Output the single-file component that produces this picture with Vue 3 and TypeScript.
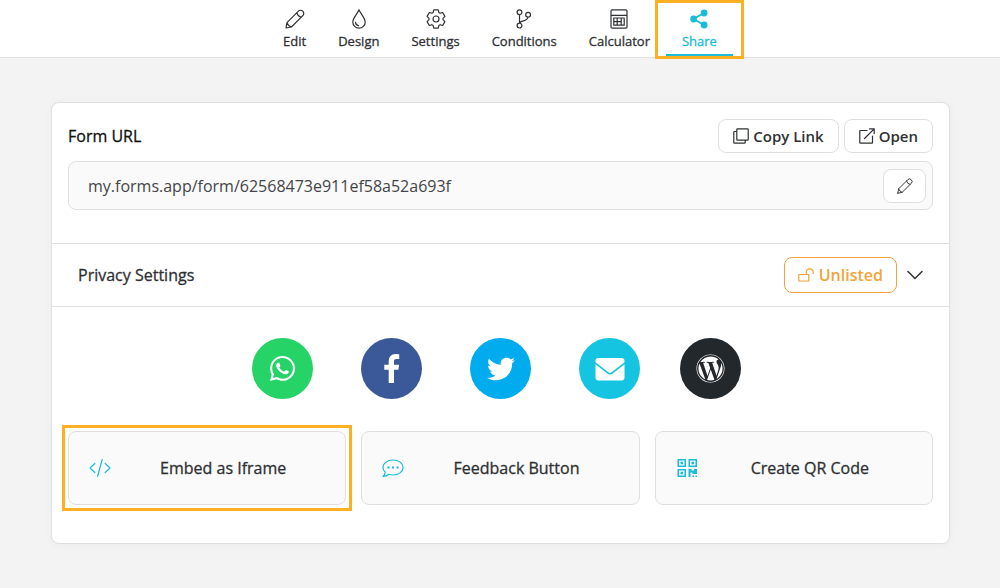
<script setup lang="ts">
import { ref } from 'vue'

interface Tab {
  label: string
  stroke?: string
  fill?: string
}

interface SocialLink {
  name: string
  color: string
  viewBox: string
  size: number
  path: string
}

const tabs: Tab[] = [
  {
    label: 'Edit',
    stroke:
      'M1 19l1-5.4L13.4 2.200a3 3 0 0 1 4.400 0a3 3 0 0 1 0 4.400L6.400 18L1 19zM11.900 3.700q.6 3.600 4.400 4.400M2 13.600q.8 3.200 4.400 4.400',
  },
  {
    label: 'Design',
    stroke: 'M10 .8C8.300 5 3.800 9 3.800 13.200a6.200 6 0 0 0 12.400 0C16.200 9 11.700 5 10 .8zM6.500 13.400a3.500 3.400 0 0 0 3 3.200',
  },
  {
    label: 'Settings',
    stroke:
      'M7.800 .9H12.200L12.900 3.600L14.100 4.300L16.700 3.500L18.900 7.400L17 9.300V10.700L18.900 12.600L16.700 16.500L14.100 15.700L12.900 16.400L12.200 19.100H7.800L7.100 16.400L5.900 15.700L3.300 16.500L1.100 12.600L3 10.700V9.300L1.100 7.400L3.300 3.500L5.900 4.300L7.100 3.600ZM13 10a3 3 0 1 1-6 0a3 3 0 0 1 6 0z',
  },
  {
    label: 'Conditions',
    stroke:
      'M7.900 3.200a2.400 2.400 0 1 1-4.800 0a2.400 2.400 0 0 1 4.800 0zM7.900 16.600a2.400 2.400 0 1 1-4.800 0a2.400 2.400 0 0 1 4.800 0zM16.500 5.700a2.400 2.400 0 1 1-4.800 0a2.400 2.400 0 0 1 4.800 0zM5.500 5.600V14.200M13.800 8.100C13.600 13.500 6.500 10.500 5.800 14.200',
  },
  {
    label: 'Calculator',
    stroke:
      'M3.200 .8H16.800Q18 .8 18 2V18Q18 19.200 16.800 19.200H3.200Q2 19.200 2 18V2Q2 .8 3.200 .8zM2 6.300H18M4.800 9H15.200V16.200H4.800zM4.800 12.600H12.200M8.200 9V16.200M12.200 9V16.200',
  },
  {
    label: 'Share',
    stroke: 'M15 4L4.500 10L15 16',
    fill: 'M18.500 4a3.400 3.400 0 1 1-6.800 0a3.400 3.400 0 0 1 6.800 0zM8 10a3.400 3.400 0 1 1-6.800 0a3.400 3.400 0 0 1 6.800 0zM18.500 16a3.400 3.400 0 1 1-6.800 0a3.400 3.400 0 0 1 6.800 0z',
  },
]

const socials: SocialLink[] = [
  {
    name: 'WhatsApp',
    color: '#25d366',
    viewBox: '0 32 448 448',
    size: 25,
    path: 'M380.9 97.1C339 55.1 283.2 32 223.9 32c-122.4 0-222 99.6-222 222 0 39.1 10.2 77.3 29.6 111L0 480l117.7-30.9c32.4 17.7 68.9 27 106.1 27h.1c122.3 0 224.1-99.6 224.1-222 0-59.3-25.2-115-67.1-157zm-157 341.6c-33.2 0-65.7-8.9-94-25.7l-6.7-4-69.8 18.3L72 359.2l-4.4-7c-18.500-29.400-28.200-63.300-28.200-98.200 0-101.700 82.800-184.500 184.600-184.500 49.300 0 95.600 19.200 130.400 54.100 34.800 34.900 56.200 81.200 56.100 130.500 0 101.800-84.900 184.600-186.600 184.600zm101.200-138.200c-5.500-2.800-32.800-16.200-37.900-18-5.100-1.900-8.800-2.800-12.500 2.800-3.700 5.600-14.300 18-17.600 21.800-3.200 3.700-6.500 4.200-12 1.400-32.600-16.300-54-29.100-75.500-66-5.700-9.800 5.700-9.100 16.300-30.300 1.800-3.700.9-6.900-.5-9.700-1.400-2.800-12.500-30.100-17.100-41.200-4.500-10.800-9.100-9.300-12.500-9.500-3.200-.2-6.900-.2-10.600-.2-3.700 0-9.700 1.400-14.800 6.900-5.100 5.600-19.400 19-19.400 46.300 0 27.300 19.900 53.700 22.600 57.400 2.800 3.700 39.100 59.700 94.800 83.800 35.200 15.200 49 16.500 66.600 13.900 10.700-1.600 32.800-13.400 37.400-26.400 4.600-13 4.600-24.100 3.200-26.400-1.300-2.500-5-3.900-10.500-6.600z',
  },
  {
    name: 'Facebook',
    color: '#3b5998',
    viewBox: '0 0 1792 1664',
    size: 31,
    path: 'M1343 12v264h-157q-86 0-116 36t-30 108v189h293l-39 296h-254v759h-306v-759h-255v-296h255v-218q0-186 104-288.500t277-102.500q147 0 228 12z',
  },
  {
    name: 'Twitter',
    color: '#00acee',
    viewBox: '0 0 512 512',
    size: 28,
    path: 'M459.370 151.716c.325 4.548.325 9.097.325 13.645 0 138.720-105.583 298.558-298.558 298.558-59.452 0-114.680-17.219-161.137-47.106 8.447.974 16.568 1.299 25.340 1.299 49.055 0 94.213-16.568 130.274-44.832-46.132-.975-84.792-31.188-98.112-72.772 6.498.974 12.995 1.624 19.818 1.624 9.421 0 18.843-1.300 27.614-3.573-48.081-9.747-84.143-51.980-84.143-102.985v-1.299c13.969 7.797 30.214 12.670 47.431 13.319-28.264-18.843-46.781-51.005-46.781-87.391 0-19.492 5.197-37.360 14.294-52.954 51.655 63.675 129.300 105.258 216.365 109.807-1.624-7.797-2.599-15.918-2.599-24.040 0-57.828 46.782-104.934 104.934-104.934 30.213 0 57.502 12.670 76.670 33.137 23.715-4.548 46.456-13.320 66.599-25.340-7.798 24.366-24.366 44.833-46.132 57.827 21.117-2.273 41.584-8.122 60.426-16.243-14.292 20.791-32.161 39.308-52.628 54.253z',
  },
  {
    name: 'Email',
    color: '#14c4e0',
    viewBox: '0 0 30 30',
    size: 30,
    path: 'M3.500 4H26.500Q29.500 4 29.500 7V8.200L16.600 18.300Q15 19.500 13.400 18.300L.5 8.200V7Q.5 4 3.500 4zM.5 10.300L12.600 19.700Q15 21.300 17.400 19.700L29.500 10.300V23.500Q29.500 26.500 26.500 26.500H3.500Q.5 26.500 .5 23.500z',
  },
  {
    name: 'WordPress',
    color: '#23282d',
    viewBox: '0 0 512 512',
    size: 29,
    path: 'M61.700 169.400l101.500 278C92.200 413 43.300 340.200 43.300 256c0-30.900 6.600-60.100 18.400-86.600zm337.900 75.900c0-26.300-9.400-44.500-17.500-58.700-10.800-17.500-20.900-32.400-20.900-49.900 0-19.600 14.800-37.800 35.700-37.800.9 0 1.800.1 2.800.2-37.900-34.700-88.300-55.900-143.700-55.900-74.300 0-139.700 38.100-177.800 95.900 5 .2 9.700.3 13.700.3 22.200 0 56.700-2.700 56.700-2.700 11.500-.7 12.800 16.200 1.400 17.500 0 0-11.500 1.300-24.300 2l77.500 230.400L249.800 247l-33.100-90.800c-11.500-.7-22.300-2-22.300-2-11.500-.7-10.100-18.200 1.300-17.500 0 0 35.100 2.700 56 2.700 22.200 0 56.700-2.700 56.700-2.700 11.500-.7 12.800 16.200 1.400 17.500 0 0-11.500 1.300-24.300 2l76.900 228.700 21.200-70.900c9-29.400 16-50.500 16-68.700zm-139.900 29.300l-63.800 185.500c19.100 5.600 39.200 8.700 60.100 8.700 24.800 0 48.500-4.300 70.600-12.100-.6-.9-1.100-1.900-1.500-2.900l-65.400-179.200zm183-120.700c.9 6.800 1.400 14 1.400 21.900 0 21.600-4 45.800-16.200 76.200l-65 187.900C426.200 403 468.700 334.500 468.700 256c0-37-9.400-71.800-26-102.100zM504 256c0 136.800-111.300 248-248 248C119.200 504 8 392.700 8 256 8 119.200 119.200 8 256 8c136.700 0 248 111.200 248 248zm-11.400 0c0-130.500-106.200-236.600-236.600-236.600C125.500 19.400 19.400 125.500 19.400 256S125.600 492.600 256 492.600c130.500 0 236.600-106.100 236.600-236.600z',
  },
]

const activeTab = ref('Share')
const formUrl = ref('my.forms.app/form/62568473e911ef58a52a693f')
</script>

<template>
  <div class="page">
    <header class="topbar">
      <nav class="tabs" aria-label="Form builder">
        <button
          v-for="tab in tabs"
          :key="tab.label"
          type="button"
          class="tab medium"
          :class="{ active: tab.label === activeTab }"
          @click="activeTab = tab.label"
        >
          <svg class="tab-icon" viewBox="0 0 20 20" aria-hidden="true">
            <path v-if="tab.stroke" class="line" :class="{ heavy: tab.fill }" :d="tab.stroke" />
            <path v-if="tab.fill" class="solid" :d="tab.fill" />
          </svg>
          <span>{{ tab.label }}</span>
          <span v-if="tab.label === 'Share'" class="highlight tab-highlight"></span>
        </button>
      </nav>
    </header>

    <main class="content">
      <section class="card">
        <div class="url-section">
          <div class="url-head">
            <label class="title medium" for="form-url">Form URL</label>
            <div class="actions">
              <button type="button" class="btn">
                <svg class="btn-icon" viewBox="0 0 16 16" aria-hidden="true">
                  <path class="line" d="M4.500 .8H14.500Q15.200 .8 15.200 1.500V11.500Q15.200 12.200 14.500 12.200H4.500Q3.800 12.200 3.800 11.500V1.500Q3.800 .8 4.500 .8zM3.800 3.500H1.500Q.8 3.500 .8 4.200V14.500Q.8 15.200 1.500 15.200H11.500Q12.200 15.200 12.200 14.500V12.200" />
                </svg>
                Copy Link
              </button>
              <button type="button" class="btn">
                <svg class="btn-icon" viewBox="0 0 16 16" aria-hidden="true">
                  <path class="line" d="M8 2.500H1.500Q.8 2.500 .8 3.200V14.500Q.8 15.200 1.500 15.200H12.800Q13.500 15.200 13.500 14.500V8M10.500 .8H15.200V5.500M15.200 .8L5.500 10.500" />
                </svg>
                Open
              </button>
            </div>
          </div>
          <div class="url-box">
            <input id="form-url" v-model="formUrl" class="url-input" type="text" readonly />
            <button type="button" class="edit-btn" aria-label="Edit URL">
              <svg class="btn-icon" viewBox="0 0 20 20" aria-hidden="true">
                <path class="line" :d="tabs[0].stroke" />
              </svg>
            </button>
          </div>
        </div>

        <div class="privacy">
          <h2 class="privacy-title medium">Privacy Settings</h2>
          <div class="privacy-controls">
            <button type="button" class="badge">
              <svg class="btn-icon" viewBox="0 0 16 16" aria-hidden="true">
                <path class="line" d="M.8 7.500H10.800V14H.8zM8.300 7.500V5Q8.300 1.800 11.700 1.800Q15.200 1.800 15.200 5V6.500" />
              </svg>
              Unlisted
            </button>
            <button type="button" class="chevron" aria-label="Expand privacy settings">
              <svg class="btn-icon" viewBox="0 0 16 16" aria-hidden="true">
                <path class="line chevron-line" d="M1 4.500L8 11.500L15 4.500" />
              </svg>
            </button>
          </div>
        </div>

        <div class="share">
          <div class="socials">
            <a
              v-for="item in socials"
              :key="item.name"
              href="#"
              class="social"
              :aria-label="item.name"
              :style="{ background: item.color }"
            >
              <svg :width="item.size" :height="item.size" :viewBox="item.viewBox" aria-hidden="true">
                <path class="solid" :d="item.path" />
              </svg>
            </a>
          </div>

          <div class="tiles">
            <button type="button" class="tile medium">
              <svg class="tile-icon" viewBox="0 0 32 24" aria-hidden="true">
                <path class="line" d="M10.800 7.500L6 12L10.800 16.500M21.200 7.500L26 12L21.200 16.500M18.200 3.500L13.500 20.500" />
              </svg>
              <span class="tile-label">Embed as Iframe</span>
              <span class="highlight tile-highlight"></span>
            </button>
            <button type="button" class="tile medium">
              <svg class="tile-icon" viewBox="0 0 32 24" aria-hidden="true">
                <path class="line" d="M16 4C21.500 4 26 7.200 26 11.500S21.500 19 16 19Q13.800 19 12 18.300Q9.500 20.500 6 20.400Q8 18.500 8.200 16.200Q6 14.200 6 11.500C6 7.200 10.500 4 16 4z" />
                <path class="solid" d="M10.500 10.500h2v2h-2zM15 10.500h2v2h-2zM19.500 10.500h2v2h-2z" />
              </svg>
              <span class="tile-label">Feedback Button</span>
            </button>
            <button type="button" class="tile medium">
              <svg class="tile-icon" viewBox="0 0 32 24" aria-hidden="true">
                <path class="solid" fill-rule="evenodd" d="M6.500 3h8.500v8H6.500zM8 4.500v5h5.500v-5zM17.500 3H26v8h-8.500zM19 4.500v5h5.500v-5zM6.500 13h8.500v8H6.500zM8 14.500v5h5.500v-5zM9.500 5.800h2.500v2.400H9.500zM20.500 5.800H23v2.400h-2.500zM9.500 15.800h2.500v2.400H9.500zM17.500 13h3v1.500h2.500V13h3v5h-4.500v-1.500H19.500V21h-2zM21.500 19.500H23V21h-1.500zM24.500 19.500H26V21h-1.500z" />
              </svg>
              <span class="tile-label">Create QR Code</span>
            </button>
          </div>
        </div>
      </section>
    </main>
  </div>
</template>

<style>
body {
  margin: 0;
  background: #f3f3f4;
}
</style>

<style scoped>
.page {
  min-height: 100vh;
  background: #f3f3f4;
  color: #2f3033;
  font-family: 'Open Sans', 'Noto Sans', sans-serif;
  font-size: 16px;
  line-height: 24px;
}

* {
  box-sizing: border-box;
}

button {
  font: inherit;
  color: inherit;
  cursor: pointer;
}

svg {
  display: block;
  flex: none;
}

/* Open Sans has no 500 face here, so a hairline outline thickens the regular one */
.medium {
  -webkit-text-stroke: 0.3px currentColor;
}

.line {
  fill: none;
  stroke: currentColor;
  stroke-width: 1.2;
  stroke-linecap: round;
  stroke-linejoin: round;
}

.heavy {
  stroke-width: 2;
}

.solid {
  fill: currentColor;
}

.topbar {
  display: flex;
  justify-content: center;
  background: #fff;
  border-bottom: 1px solid #e2e2e3;
}

.tabs {
  display: flex;
}

.tab {
  position: relative;
  display: flex;
  flex-direction: column;
  align-items: center;
  gap: 4px;
  padding: 9px 16px 4px;
  border: 0;
  border-bottom: 3px solid transparent;
  background: none;
  font-size: 13px;
  line-height: 17px;
}

.tab-icon {
  width: 20px;
  height: 20px;
}

.tab.active {
  color: #19bcd9;
  border-bottom-color: #19bcd9;
}

.highlight {
  position: absolute;
  border: 3px solid #fdb022;
  pointer-events: none;
}

.tab-highlight {
  inset: 0 -11px -5px;
}

.content {
  padding: 44px 50px 44px 51px;
}

.card {
  background: #fff;
  border: 1px solid #dfdfe0;
  border-radius: 8px;
  box-shadow: 0 1px 8px rgba(0, 0, 0, 0.04);
}

.url-section {
  padding: 16px 16px 33px;
}

.url-head {
  display: flex;
  align-items: center;
  justify-content: space-between;
  margin-bottom: 8px;
}

.title {
  color: #111;
}

.actions {
  display: flex;
  gap: 5px;
}

.btn {
  display: flex;
  align-items: center;
  gap: 4px;
  height: 34px;
  padding: 0 14px;
  border: 1px solid #dfdfe0;
  border-radius: 8px;
  background: #fff;
  font-size: 15px;
  font-weight: 600;
}

.btn-icon {
  width: 16px;
  height: 16px;
}

.url-box {
  display: flex;
  align-items: center;
  height: 49px;
  padding: 0 6px 0 19px;
  border: 1px solid #dfdfe0;
  border-radius: 8px;
  background: #fafafa;
}

.url-input {
  flex: 1;
  min-width: 0;
  padding: 0;
  border: 0;
  outline: 0;
  background: none;
  color: #444548;
  font: inherit;
}

.edit-btn {
  display: grid;
  place-items: center;
  width: 43px;
  height: 34px;
  padding: 0;
  border: 1px solid #dfdfe0;
  border-radius: 8px;
  background: #fff;
}

.privacy {
  display: flex;
  align-items: center;
  justify-content: space-between;
  padding: 13px 26px;
  border-top: 1px solid #dfdfe0;
  border-bottom: 1px solid #dfdfe0;
}

.privacy-title {
  margin: 0;
  font-size: 16px;
  font-weight: 400;
}

.privacy-controls {
  display: flex;
  align-items: center;
  gap: 10px;
}

.badge {
  display: flex;
  align-items: center;
  gap: 5px;
  height: 36px;
  padding: 0 13px;
  border: 1px solid #f2a33c;
  border-radius: 8px;
  background: #fff;
  color: #f2a33c;
  font-weight: 600;
}

.chevron {
  padding: 0;
  border: 0;
  background: none;
}

.chevron-line {
  stroke-width: 1.5;
}

.share {
  padding: 31px 16px 38px;
}

.socials {
  display: flex;
  justify-content: center;
  gap: 48px;
  margin-bottom: 32px;
}

.social {
  display: grid;
  place-items: center;
  width: 61px;
  height: 61px;
  border-radius: 50%;
  color: #fff;
}

.social:last-child {
  margin: 0 8px 0 -8px;
}

.tiles {
  display: grid;
  grid-template-columns: repeat(3, 1fr);
  gap: 15px;
}

.tile {
  position: relative;
  display: flex;
  align-items: center;
  height: 74px;
  padding: 0 15px;
  border: 1px solid #dfdfe0;
  border-radius: 8px;
  background: #fafafa;
}

.tile-icon {
  width: 32px;
  height: 24px;
  color: #19bcd9;
}

.tile-label {
  flex: 1;
  text-align: center;
}

.tile-highlight {
  inset: -7px;
}
</style>
